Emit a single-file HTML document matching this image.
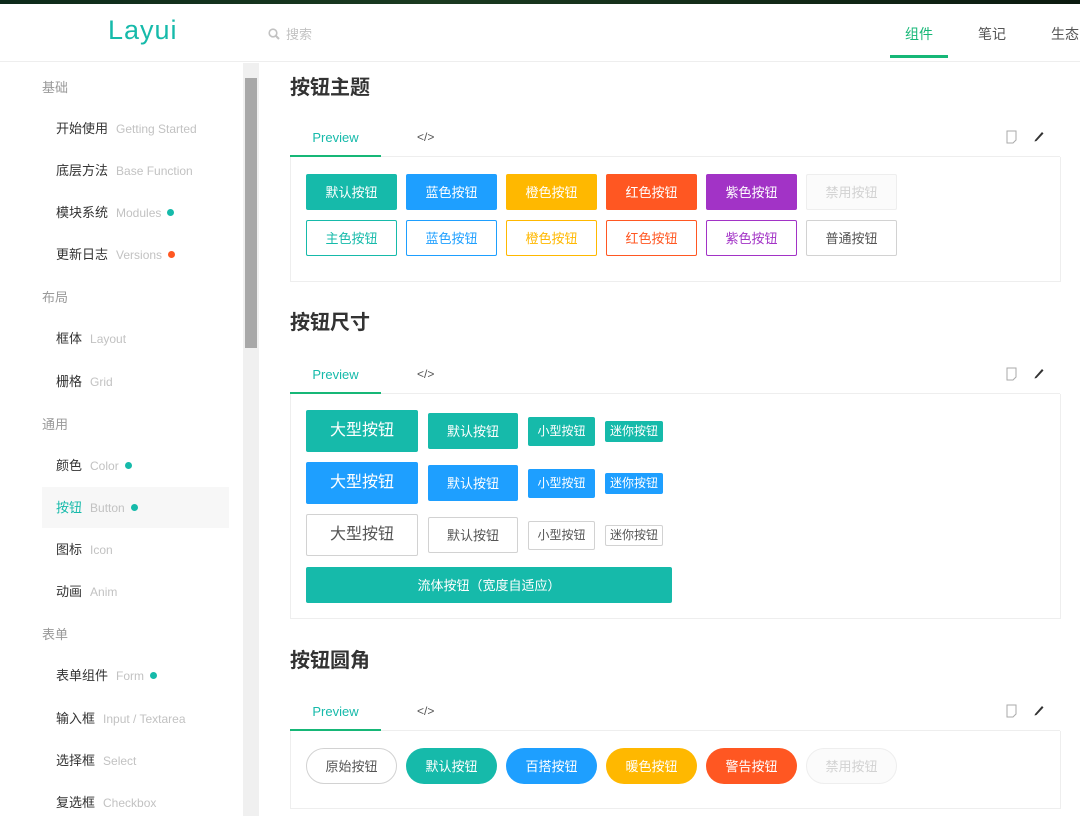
<!DOCTYPE html>
<html><head><meta charset="utf-8"><style>
*{margin:0;padding:0;box-sizing:border-box}
body{width:1080px;height:816px;overflow:hidden;background:#fff;font-family:"Liberation Sans","Noto Sans CJK SC",sans-serif;position:relative;color:#333}
.topbar{position:absolute;left:0;top:0;width:1080px;height:4px;background:linear-gradient(90deg,#0d2a1a,#1a3a20 40%,#0b1a0f)}
.header{position:absolute;top:4px;left:0;width:1080px;height:58px;border-bottom:1px solid #eee}
.logo{position:absolute;left:108px;top:11px;font-size:27px;color:#16baaa;letter-spacing:1px}
.search{position:absolute;left:268px;top:20px;font-size:13px;color:#c2c2c2}
.nav{position:absolute;top:20px;font-size:14px;color:#555}
.navline{position:absolute;left:890px;top:55px;width:58px;height:3px;background:#16b777}
.side{position:absolute;left:0;top:63px;width:243px;height:753px}
.g{position:absolute;left:42px;font-size:13px;color:#999;white-space:nowrap}
.it{position:absolute;left:56px;font-size:13px;color:#333;white-space:nowrap}
.it span{color:#c2c2c2;font-size:12px;margin-left:8px}
.dot{display:inline-block;width:7px;height:7px;border-radius:50%;background:#16baaa;margin-left:6px;vertical-align:1px}
.act{position:absolute;left:42px;top:487px;width:187px;height:41px;background:#f7f7f7}
.sb{position:absolute;left:243px;top:63px;width:16px;height:753px;background:#f0f0f0}
.thumb{position:absolute;left:245px;top:78px;width:12px;height:270px;background:#a8a8a8}
h2{position:absolute;left:290px;font-size:20px;font-weight:bold;color:#333}
.tabs{position:absolute;left:290px;width:770px;height:38px;border-bottom:1px solid #eee}
.tabs .p{position:absolute;left:0;width:91px;text-align:center;top:11px;font-size:13px;color:#16baaa}
.tabs .u{position:absolute;left:0;bottom:-1px;width:91px;height:2px;background:#16b777}
.tabs .c{position:absolute;left:127px;top:11px;font-size:12px;color:#555}
.box{position:absolute;left:290px;width:771px;border:1px solid #eee;border-top:none}
.b{position:absolute;height:36px;line-height:36px;width:91px;text-align:center;font-size:13px;color:#fff;border-radius:2px;border:1px solid transparent;white-space:nowrap}
.t{background:#16baaa}.bl{background:#1e9fff}.o{background:#ffb800}.r{background:#ff5722}.pu{background:#a233c6}
.d{background:#fbfbfb;color:#d2d2d2;border-color:#eee}
.ot{border-color:#16baaa;color:#16baaa}.ob{border-color:#1e9fff;color:#1e9fff}.oo{border-color:#ffb800;color:#ffb800}.or{border-color:#ff5722;color:#ff5722}.op{border-color:#a233c6;color:#a233c6}.on{border-color:#d2d2d2;color:#555}
.rd{border-radius:18px}
</style></head><body>
<div class="topbar"></div>
<div class="header">
<div class="logo">Layui</div>
<div class="search"><svg width="12" height="12" viewBox="0 0 12 12" style="vertical-align:-1px;margin-right:6px"><circle cx="5" cy="5" r="3.8" fill="none" stroke="#c2c2c2" stroke-width="1.6"/><line x1="8" y1="8" x2="11" y2="11" stroke="#c2c2c2" stroke-width="2"/></svg>搜索</div>
<div class="nav" style="left:905px;color:#16b777">组件</div>
<div class="nav" style="left:978px">笔记</div>
<div class="nav" style="left:1051px">生态</div>
</div>
<div class="navline"></div>
<div class="side">
<div class="act" style="top:424px"></div>
</div>
<div style="position:absolute;left:0;top:-2px;width:243px">
<div class="g" style="top:79px">基础</div>
<div class="it" style="top:120px">开始使用<span>Getting Started</span></div>
<div class="it" style="top:162px">底层方法<span>Base Function</span></div>
<div class="it" style="top:204px">模块系统<span>Modules</span><i class="dot"></i></div>
<div class="it" style="top:246px">更新日志<span>Versions</span><i class="dot" style="background:#ff5722"></i></div>
<div class="g" style="top:289px">布局</div>
<div class="it" style="top:330px">框体<span>Layout</span></div>
<div class="it" style="top:373px">栅格<span>Grid</span></div>
<div class="g" style="top:416px">通用</div>
<div class="it" style="top:457px">颜色<span>Color</span><i class="dot"></i></div>
<div class="it" style="top:499px;color:#16baaa">按钮<span>Button</span><i class="dot"></i></div>
<div class="it" style="top:541px">图标<span>Icon</span></div>
<div class="it" style="top:583px">动画<span>Anim</span></div>
<div class="g" style="top:626px">表单</div>
<div class="it" style="top:667px">表单组件<span>Form</span><i class="dot"></i></div>
<div class="it" style="top:710px">输入框<span>Input / Textarea</span></div>
<div class="it" style="top:752px">选择框<span>Select</span></div>
<div class="it" style="top:794px">复选框<span>Checkbox</span></div>
</div>
<div class="sb"></div><div class="thumb"></div>

<h2 style="top:71px">按钮主题</h2>
<div class="tabs" style="top:119px"><div class="p">Preview</div><div class="u"></div><div class="c">&lt;/&gt;</div>
<svg style="position:absolute;left:716px;top:11px" width="12" height="14" viewBox="0 0 12 14"><path d="M1 1H10V10L7 13H1Z" fill="none" stroke="#aaa"/></svg>
<svg style="position:absolute;left:743px;top:11px" width="12" height="12" viewBox="0 0 12 12"><path d="M2 10L9 2L10.5 3.5L3.5 11L1.5 11.5Z" fill="#333"/></svg></div>
<div class="box" style="top:157px;height:125px"></div>
<div class="b t" style="left:306px;top:174px">默认按钮</div>
<div class="b bl" style="left:406px;top:174px">蓝色按钮</div>
<div class="b o" style="left:506px;top:174px">橙色按钮</div>
<div class="b r" style="left:606px;top:174px">红色按钮</div>
<div class="b pu" style="left:706px;top:174px">紫色按钮</div>
<div class="b d" style="left:806px;top:174px">禁用按钮</div>
<div class="b ot" style="left:306px;top:220px">主色按钮</div>
<div class="b ob" style="left:406px;top:220px">蓝色按钮</div>
<div class="b oo" style="left:506px;top:220px">橙色按钮</div>
<div class="b or" style="left:606px;top:220px">红色按钮</div>
<div class="b op" style="left:706px;top:220px">紫色按钮</div>
<div class="b on" style="left:806px;top:220px">普通按钮</div>

<h2 style="top:306px">按钮尺寸</h2>
<div class="tabs" style="top:356px"><div class="p">Preview</div><div class="u"></div><div class="c">&lt;/&gt;</div>
<svg style="position:absolute;left:716px;top:11px" width="12" height="14" viewBox="0 0 12 14"><path d="M1 1H10V10L7 13H1Z" fill="none" stroke="#aaa"/></svg>
<svg style="position:absolute;left:743px;top:11px" width="12" height="12" viewBox="0 0 12 12"><path d="M2 10L9 2L10.5 3.5L3.5 11L1.5 11.5Z" fill="#333"/></svg></div>
<div class="box" style="top:394px;height:225px"></div>
<div class="b t" style="left:306px;top:410px;width:112px;height:42px;line-height:40px;font-size:16px">大型按钮</div>
<div class="b t" style="left:428px;top:413px;width:90px">默认按钮</div>
<div class="b t" style="left:528px;top:417px;width:67px;height:29px;line-height:27px;font-size:12px">小型按钮</div>
<div class="b t" style="left:605px;top:421px;width:58px;height:21px;line-height:19px;font-size:12px">迷你按钮</div>
<div class="b bl" style="left:306px;top:462px;width:112px;height:42px;line-height:40px;font-size:16px">大型按钮</div>
<div class="b bl" style="left:428px;top:465px;width:90px">默认按钮</div>
<div class="b bl" style="left:528px;top:469px;width:67px;height:29px;line-height:27px;font-size:12px">小型按钮</div>
<div class="b bl" style="left:605px;top:473px;width:58px;height:21px;line-height:19px;font-size:12px">迷你按钮</div>
<div class="b on" style="left:306px;top:514px;width:112px;height:42px;line-height:40px;font-size:16px">大型按钮</div>
<div class="b on" style="left:428px;top:517px;width:90px">默认按钮</div>
<div class="b on" style="left:528px;top:521px;width:67px;height:29px;line-height:27px;font-size:12px">小型按钮</div>
<div class="b on" style="left:605px;top:525px;width:58px;height:21px;line-height:19px;font-size:12px">迷你按钮</div>
<div class="b t" style="left:306px;top:567px;width:366px">流体按钮（宽度自适应）</div>

<h2 style="top:644px">按钮圆角</h2>
<div class="tabs" style="top:693px"><div class="p">Preview</div><div class="u"></div><div class="c">&lt;/&gt;</div>
<svg style="position:absolute;left:716px;top:11px" width="12" height="14" viewBox="0 0 12 14"><path d="M1 1H10V10L7 13H1Z" fill="none" stroke="#aaa"/></svg>
<svg style="position:absolute;left:743px;top:11px" width="12" height="12" viewBox="0 0 12 12"><path d="M2 10L9 2L10.5 3.5L3.5 11L1.5 11.5Z" fill="#333"/></svg></div>
<div class="box" style="top:731px;height:78px"></div>
<div class="b on rd" style="left:306px;top:748px">原始按钮</div>
<div class="b t rd" style="left:406px;top:748px">默认按钮</div>
<div class="b bl rd" style="left:506px;top:748px">百搭按钮</div>
<div class="b o rd" style="left:606px;top:748px">暖色按钮</div>
<div class="b r rd" style="left:706px;top:748px">警告按钮</div>
<div class="b d rd" style="left:806px;top:748px">禁用按钮</div>
</body></html>
